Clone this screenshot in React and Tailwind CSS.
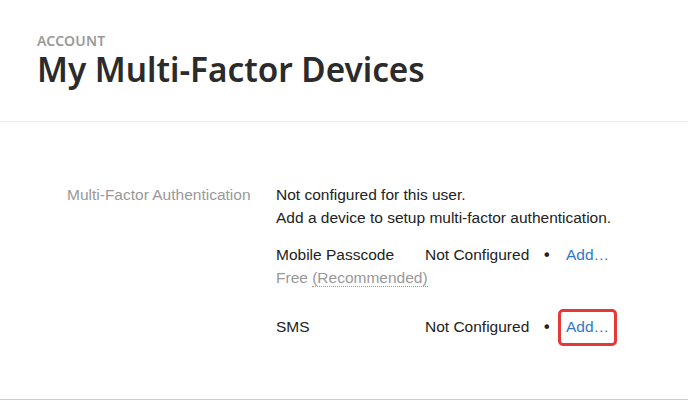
import React from 'react';

const devices = [
  { name: 'Mobile Passcode', status: 'Not Configured', note: true },
  { name: 'SMS', status: 'Not Configured', highlight: true },
];

const DeviceRow = ({ device }) => (
  <div className="mb-[26px]">
    <div className="flex items-center h-[23px]">
      <span className="w-[149px]">{device.name}</span>
      <span className="w-[119px]">{device.status}</span>
      <span className="w-[22px] text-[#222] text-[16px] font-bold">•</span>
      {device.highlight ? (
        <span className="-ml-[8px] mt-[2px] px-[5px] h-[37px] flex items-center rounded-[5px] border-[3px] border-[#e53935]">
          <a className="text-[#3277c6] -mt-[2px]">Add…</a>
        </span>
      ) : (
        <a className="text-[#3277c6]">Add…</a>
      )}
    </div>
    {device.note && (
      <div className="h-[23px] text-[#999]">
        Free <span className="border-b border-dotted border-[#999]">(Recommended)</span>
      </div>
    )}
  </div>
);

const App = () => {
  return (
    <div className="w-[688px] h-[400px] bg-white flex flex-col overflow-hidden">
      <div className="px-[37px] pt-[32px] h-[122px] border-b border-[#ececec]" style={{ fontFamily: '"Noto Sans", sans-serif' }}>
        <div className="text-[14px] leading-[17px] font-semibold text-[#9a9a9a] tracking-[0.2px]">ACCOUNT</div>
        <h1 className="text-[33.3px] leading-[38px] font-semibold text-[#2b2b2b] mt-[1px]">My Multi-Factor Devices</h1>
      </div>
      <div className="flex-1 flex pt-[61px] pl-[67px] text-[15.5px] text-[#222] border-b border-[#cccccc]" style={{ fontFamily: '"Liberation Sans", Arial, sans-serif' }}>
        <div className="w-[209px] text-[#999] leading-[23px]">Multi-Factor Authentication</div>
        <div className="leading-[23px]">
          <div>Not configured for this user.</div>
          <div className="mb-[14px]">Add a device to setup multi-factor authentication.</div>
          {devices.map(d => (
            <DeviceRow key={d.name} device={d} />
          ))}
        </div>
      </div>
    </div>
  );
};

export default App;
